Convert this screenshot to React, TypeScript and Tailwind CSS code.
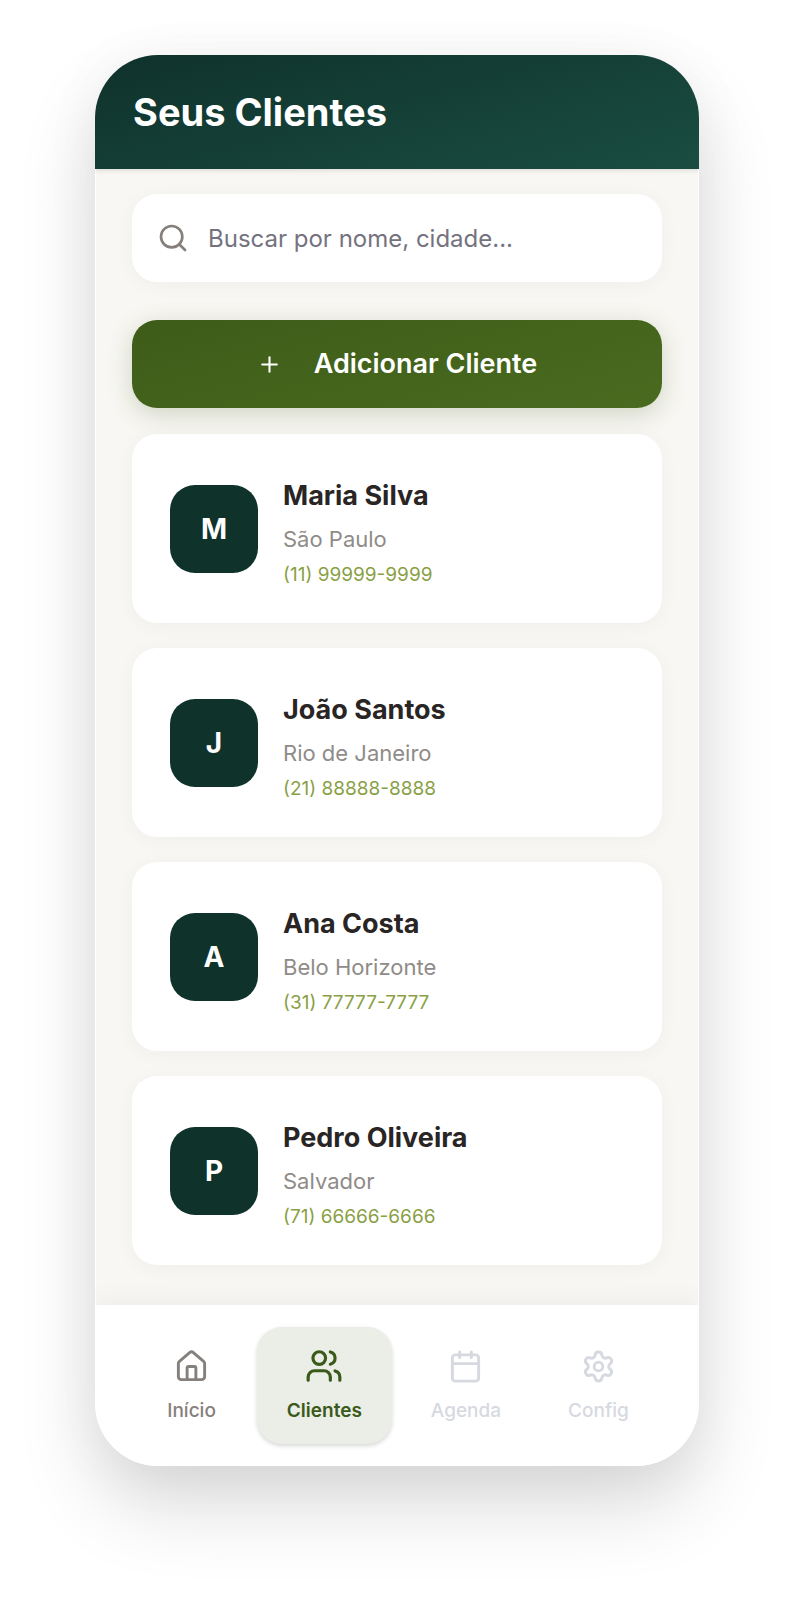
import { Calendar, House, Plus, Search, Settings, Users } from "lucide-react";

const clients = [
  { name: "Maria Silva", city: "São Paulo", phone: "(11) 99999-9999" },
  { name: "João Santos", city: "Rio de Janeiro", phone: "(21) 88888-8888" },
  { name: "Ana Costa", city: "Belo Horizonte", phone: "(31) 77777-7777" },
  { name: "Pedro Oliveira", city: "Salvador", phone: "(71) 66666-6666" },
];

const tabs = [
  { label: "Início", icon: House, state: "idle" },
  { label: "Clientes", icon: Users, state: "active" },
  { label: "Agenda", icon: Calendar, state: "disabled" },
  { label: "Config", icon: Settings, state: "disabled" },
];

const tabStyles: Record<string, string> = {
  idle: "px-[30px] font-medium text-[#85807c]",
  active:
    "bg-[#ebede7] px-[30px] font-semibold text-[#3a5a1a] shadow-[0_2px_4px_rgba(0,0,0,0.16)]",
  disabled: "px-7 font-medium text-[#d6d9df]",
};

function ClientCard({ name, city, phone }: { name: string; city: string; phone: string }) {
  return (
    <li className="flex items-center gap-[25px] rounded-[25px] bg-white px-[38px] py-[27px] shadow-[0_3px_20px_rgba(0,0,0,0.04)]">
      <div className="flex size-[88px] shrink-0 items-center justify-center rounded-[25px] bg-[#0f322b] text-[28px] font-bold text-white">
        {name[0]}
      </div>
      <div className="pt-1.5">
        <h2 className="text-[27px] leading-[57px] font-bold text-[#292524]">{name}</h2>
        <p className="text-[22px] leading-[30px] text-[#8f8b88]">{city}</p>
        <p className="text-[19px] leading-[42px] text-[#8a9f45]">{phone}</p>
      </div>
    </li>
  );
}

export default function App() {
  return (
    <div className="bg-white px-4 pt-[55px] pb-[134px] font-['Inter',sans-serif]">
      <div className="mx-auto max-w-[604px] overflow-hidden rounded-[63px] bg-white shadow-[0_40px_80px_rgba(10,10,0,0.14),0_8px_60px_rgba(0,0,0,0.05)]">
        <header className="relative bg-linear-[165deg,#0f322b,#1a4d42] px-[38px] py-[30px] shadow-[0_2px_4px_rgba(0,0,0,0.1)]">
          <h1 className="text-[38px] leading-[54px] font-bold text-white">Seus Clientes</h1>
        </header>

        <main className="mx-px bg-[#f8f7f3] px-9 pt-[25px] pb-10">
          <div className="flex h-[88px] items-center gap-[19px] rounded-[25px] bg-white px-[25px] shadow-[0_3px_20px_rgba(0,0,0,0.04)]">
            <Search className="size-8 shrink-0 text-[#85807c]" strokeWidth={2} />
            <input
              type="text"
              aria-label="Buscar por nome, cidade..."
              placeholder="Buscar por nome, cidade..."
              className="h-full w-full min-w-0 bg-transparent text-[24px] text-[#292524] outline-none placeholder:text-[#757280]"
            />
          </div>

          <button
            type="button"
            className="mt-[38px] flex h-[88px] w-full items-center justify-center gap-8 rounded-[25px] bg-linear-[165deg,#3e5c19,#496b1f] text-[27px] font-semibold text-white shadow-[0_6px_24px_rgba(62,92,25,0.22)]"
          >
            <Plus className="size-[25px]" strokeWidth={2} />
            Adicionar Cliente
          </button>

          <ul className="mt-[26px] flex flex-col gap-[25px]">
            {clients.map((client) => (
              <ClientCard key={client.name} {...client} />
            ))}
          </ul>
        </main>

        <nav className="relative flex justify-center gap-[11px] bg-white px-4 py-[22px] shadow-[0_-4px_24px_rgba(0,0,0,0.05)]">
          {tabs.map(({ label, icon: Icon, state }) => (
            <button
              key={label}
              type="button"
              disabled={state === "disabled"}
              aria-current={state === "active" ? "page" : undefined}
              className={`flex flex-col items-center gap-3 rounded-[25px] py-5 text-[19px] leading-[27px] ${tabStyles[state]}`}
            >
              <span className="flex h-[38px] items-center">
                <Icon className={state === "active" ? "size-[38px]" : "size-[35px]"} strokeWidth={2} />
              </span>
              {label}
            </button>
          ))}
        </nav>
      </div>
    </div>
  );
}
